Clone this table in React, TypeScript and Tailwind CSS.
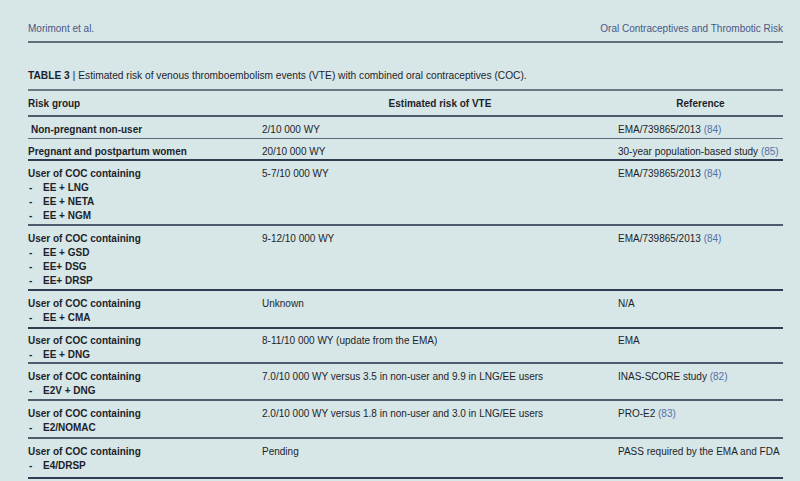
import React from "react";

type Row = {
  group: string;
  items?: string[];
  risk: string;
  ref: string;
  cite?: string;
  border: string;
  indent?: boolean;
};

const rows: Row[] = [
  {
    group: "Non-pregnant non-user",
    risk: "2/10 000 WY",
    ref: "EMA/739865/2013",
    cite: "(84)",
    border: "pt-[6px] pb-[1px] border-b border-[#5d6b7b]",
    indent: true,
  },
  {
    group: "Pregnant and postpartum women",
    risk: "20/10 000 WY",
    ref: "30-year population-based study",
    cite: "(85)",
    border: "pt-[6px] border-b-2 border-[#2f3d52]",
  },
  {
    group: "User of COC containing",
    items: ["EE + LNG", "EE + NETA", "EE + NGM"],
    risk: "5-7/10 000 WY",
    ref: "EMA/739865/2013",
    cite: "(84)",
    border: "pt-[6px] pb-[1px] border-b-2 border-[#4d5b6c]",
  },
  {
    group: "User of COC containing",
    items: ["EE + GSD", "EE+ DSG", "EE+ DRSP"],
    risk: "9-12/10 000 WY",
    ref: "EMA/739865/2013",
    cite: "(84)",
    border: "pt-[6px] pb-[1px] border-b-2 border-[#2f3d52]",
  },
  {
    group: "User of COC containing",
    items: ["EE + CMA"],
    risk: "Unknown",
    ref: "N/A",
    border: "pt-[6px] pb-[2px] border-b-2 border-[#2f3d52]",
  },
  {
    group: "User of COC containing",
    items: ["EE + DNG"],
    risk: "8-11/10 000 WY (update from the EMA)",
    ref: "EMA",
    border: "pt-[5px] border-b-2 border-[#4d5b6c]",
  },
  {
    group: "User of COC containing",
    items: ["E2V + DNG"],
    risk: "7.0/10 000 WY versus 3.5 in non-user and 9.9 in LNG/EE users",
    ref: "INAS-SCORE study",
    cite: "(82)",
    border: "pt-[6px] pb-[1px] border-b-2 border-[#4d5b6c]",
  },
  {
    group: "User of COC containing",
    items: ["E2/NOMAC"],
    risk: "2.0/10 000 WY versus 1.8 in non-user and 3.0 in LNG/EE users",
    ref: "PRO-E2",
    cite: "(83)",
    border: "pt-[6px] pb-[2px] border-b-2 border-[#4d5b6c]",
  },
  {
    group: "User of COC containing",
    items: ["E4/DRSP"],
    risk: "Pending",
    ref: "PASS required by the EMA and FDA",
    border: "pt-[6px] pb-[4px] border-b-2 border-[#2f3d52]",
  },
];

export default function App() {
  return (
    <div className="w-[800px] h-[481px] overflow-hidden bg-[#d7e6e6] font-['Liberation_Sans',Arial,sans-serif] text-[10px] leading-[14px] text-[#1d1f2b]">
      <div className="ml-[28px] w-[755px] pt-[22px]">
        {/* running header */}
        <div className="flex justify-between text-[#4a5887] pb-[5px] border-b-2 border-[#5f6d7c]">
          <span>Morimont et al.</span>
          <span>Oral Contraceptives and Thrombotic Risk</span>
        </div>

        {/* caption */}
        <div className="mt-[26px] pb-[6px] border-b-2 border-[#6a7785] text-[10.2px]">
          <span className="font-bold">TABLE 3</span>{" "}
          <span className="font-bold text-[#4a6aa8]">|</span> Estimated risk of
          venous thromboembolism events (VTE) with combined oral contraceptives
          (COC).
        </div>

        {/* head */}
        <div className="grid grid-cols-[234px_356px_165px] font-bold pt-[6px] pb-[4px] border-b-2 border-[#4d5b6c]">
          <div>Risk group</div>
          <div className="text-center">Estimated risk of VTE</div>
          <div className="text-center">Reference</div>
        </div>

        {rows.map((row, idx) => (
          <div
            key={idx}
            className={`grid grid-cols-[234px_356px_165px] ${row.border}`}
          >
            <div className={`font-bold ${row.indent ? "pl-[3px]" : ""}`}>
              <div>{row.group}</div>
              {row.items?.map((item) => (
                <div key={item} className="flex">
                  <span className="w-[15px] pl-[1px]">-</span>
                  <span>{item}</span>
                </div>
              ))}
            </div>
            <div>{row.risk}</div>
            <div>
              {row.ref}
              {row.cite && (
                <span className="text-[#5470a8]"> {row.cite}</span>
              )}
            </div>
          </div>
        ))}
      </div>
    </div>
  );
}
